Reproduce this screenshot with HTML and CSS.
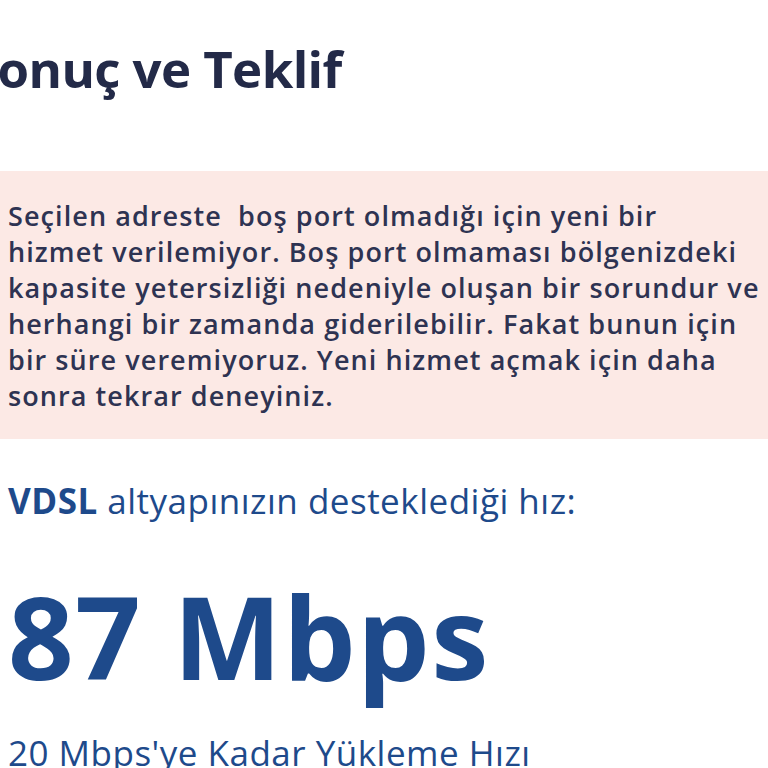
FILE: index.html
```html
<!DOCTYPE html>
<html lang="tr">
<head>
<meta charset="utf-8">
<link rel="stylesheet" href="styles.css">
</head>
<body>
<main class="page">
  <h1 class="title">Sonuç ve Teklif</h1>
  <div class="notice">
    <p class="notice-text">Seçilen adreste&nbsp; boş port olmadığı için yeni bir<br>hizmet verilemiyor. Boş port olmaması bölgenizdeki<br>kapasite yetersizliği nedeniyle oluşan bir sorundur ve<br>herhangi bir zamanda giderilebilir. Fakat bunun için<br>bir süre veremiyoruz. Yeni hizmet açmak için daha<br>sonra tekrar deneyiniz.</p>
  </div>
  <section class="speed">
    <p class="speed-label"><strong>VDSL</strong> altyapınızın desteklediği hız:</p>
    <p class="speed-value">87 Mbps</p>
    <p class="speed-upload">20 Mbps'ye Kadar Yükleme Hızı</p>
  </section>
</main>
</body>
</html>
```
FILE: styles.css
```css
html, body {
  margin: 0;
  padding: 0;
  background: #ffffff;
  overflow: hidden;
}
body {
  font-family: "Open Sans", "Noto Sans", sans-serif;
}
.page {
  padding-top: 37px;
}
.title {
  margin: 0 0 72px -30px;
  font-size: 51px;
  line-height: 62px;
  font-weight: 700;
  letter-spacing: -0.6px;
  color: #232a48;
  white-space: nowrap;
}
.notice {
  background: #fce9e5;
  padding: 27px 0 25px 8px;
}
.notice-text {
  margin: 0;
  font-size: 27px;
  line-height: 36px;
  font-weight: 600;
  letter-spacing: 1.08px;
  color: #2e3352;
  white-space: nowrap;
}
.speed {
  padding: 38px 8px 0 8px;
  color: #1e4a8b;
}
.speed-label {
  margin: 0;
  font-size: 35px;
  line-height: 48px;
  font-weight: 400;
  letter-spacing: 0.5px;
}
.speed-label strong {
  font-weight: 700;
}
.speed-value {
  margin: 53px 0 0 0;
  font-size: 115px;
  line-height: 115px;
  font-weight: 700;
  letter-spacing: 1.3px;
  white-space: nowrap;
}
.speed-upload {
  margin: 36px 0 0 0;
  font-size: 35px;
  line-height: 48px;
  font-weight: 400;
  letter-spacing: 0.5px;
  white-space: nowrap;
}
```
